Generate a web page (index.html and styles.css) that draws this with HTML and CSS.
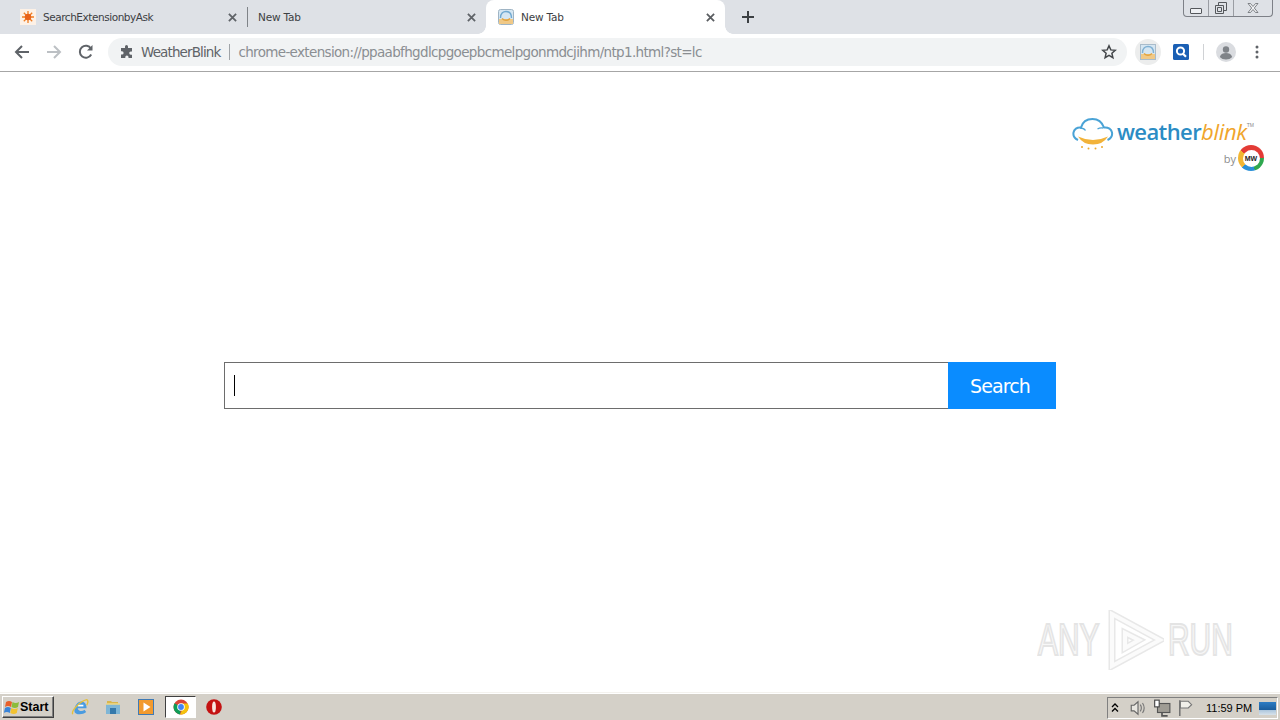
FILE: index.html
```html
<!DOCTYPE html>
<html lang="en">
<head>
<meta charset="utf-8">
<title>New Tab</title>
<link rel="stylesheet" href="styles.css">
</head>
<body>
<div class="browser">
  <header class="tabstrip">
    <div class="tab">
      <svg class="favicon" viewBox="0 0 16 16"><rect width="16" height="16" fill="#fdf1e6"/><g stroke="#ef7d22" stroke-width="1.3"><path d="M8 2v12M2 8h12M3.800 3.800l8.400 8.400M12.200 3.800l-8.400 8.400"/></g><circle cx="8" cy="8" r="3.200" fill="#e8621a"/></svg>
      <span class="tab-title">SearchExtensionbyAsk</span>
      <svg class="tab-close" viewBox="0 0 10 10"><path d="M1 1l8 8M9 1l-8 8"/></svg>
    </div>
    <div class="tab tab-sep">
      <span class="tab-title">New Tab</span>
      <svg class="tab-close" viewBox="0 0 10 10"><path d="M1 1l8 8M9 1l-8 8"/></svg>
    </div>
    <div class="tab tab-active">
      <svg class="favicon" viewBox="0 0 16 16"><rect x=".5" y=".5" width="15" height="15" rx="2" fill="#d5e6f2" stroke="#9fb4c4"/><path d="M2.500 9c0-5 3-6.500 5.500-6.500S13.500 4 13.500 9" fill="none" stroke="#6fa8d0" stroke-width="1.400"/><path d="M1 10h14v5H1z" fill="#f0c987"/><path d="M4 9.500q4 3.500 8 0" fill="none" stroke="#e2a33e" stroke-width="1.500"/></svg>
      <span class="tab-title">New Tab</span>
      <svg class="tab-close tab-close-dark" viewBox="0 0 10 10"><path d="M1 1l8 8M9 1l-8 8"/></svg>
    </div>
    <svg class="new-tab" viewBox="0 0 12 12"><path d="M6 0v12M0 6h12"/></svg>
    <div class="window-controls">
      <span class="win-btn win-min"><i class="min-glyph"></i></span>
      <span class="win-btn win-max"><svg viewBox="0 0 12 12"><path d="M3.500 3V.5h8v8H9M.5 3.500h8v8h-8z"/><path d="M2.500 5.500h4v4h-4z"/></svg></span>
      <span class="win-btn win-close"><svg viewBox="0 0 14 10"><path d="M2 .5h2.500L7 3.500 9.500.5H12L8.300 5 12 9.500H9.500L7 6.500 4.500 9.500H2L5.700 5z"/></svg></span>
    </div>
  </header>

  <nav class="toolbar">
    <svg class="nav-icon" viewBox="0 0 16 16"><path class="nav-stroke" d="M15 8H2M8 2L2 8l6 6"/></svg>
    <svg class="nav-icon nav-disabled" viewBox="0 0 16 16"><path class="nav-stroke" d="M1 8h13M8 2l6 6-6 6"/></svg>
    <svg class="nav-icon" viewBox="0 0 16 16"><path class="nav-stroke" d="M13.200 10.500A6 6 0 1 1 13 4.700"/><path class="nav-fill" d="M14.500 1v5.500H9z"/></svg>
    <div class="omnibox">
      <svg class="puzzle" viewBox="0 0 14 14"><path d="M5 1.500a1.500 1.500 0 0 1 3 0V3h4v3.500h-1.200a1.600 1.600 0 0 0 0 3.200H12V13H8.500v-1a1.600 1.600 0 0 0-3.200 0v1H1V9.500h1a1.600 1.600 0 0 0 0-3.200H1V3h4z"/></svg>
      <span class="site-name">WeatherBlink</span>
      <span class="omni-sep"></span>
      <span class="url">chrome-extension://ppaabfhgdlcpgoepbcmelpgonmdcjihm/ntp1.html?st=lc</span>
      <svg class="star" viewBox="0 0 16 16"><path d="M8 1.800l1.800 4.100 4.500.4-3.400 3 1 4.400L8 11.400l-3.900 2.300 1-4.400-3.400-3 4.500-.4z"/></svg>
    </div>
    <div class="ext-active">
      <svg class="ext-icon" viewBox="0 0 16 16"><rect x=".5" y=".5" width="15" height="15" fill="#d5e6f2" stroke="#a9bccb"/><path d="M2.500 9c0-5 3-6.500 5.500-6.500S13.500 4 13.500 9" fill="none" stroke="#7fb0d3" stroke-width="1.400"/><path d="M1 10h14v5H1z" fill="#f0c987"/><path d="M4 9.500q4 3.500 8 0" fill="none" stroke="#e2a33e" stroke-width="1.500"/></svg>
    </div>
    <svg class="ext-search" viewBox="0 0 16 16"><rect width="16" height="16" rx="1.500" fill="#1a5fb4"/><circle cx="7.500" cy="7" r="3.600" fill="none" stroke="#fff" stroke-width="2"/><path d="M10 9.800l3 3" stroke="#fff" stroke-width="2.200"/></svg>
    <span class="tool-sep"></span>
    <svg class="avatar" viewBox="0 0 20 20"><circle cx="10" cy="10" r="10" fill="#dadce0"/><circle cx="10" cy="7.500" r="3.200" fill="#7f8388"/><path d="M3.800 15c1-3 3.500-3.900 6.200-3.900s5.200.9 6.200 3.900c-1.500 1.700-3.800 2.500-6.200 2.500s-4.700-.8-6.200-2.500z" fill="#7f8388"/></svg>
    <svg class="menu-dots" viewBox="0 0 4 14"><circle cx="2" cy="2" r="1.500"/><circle cx="2" cy="7" r="1.500"/><circle cx="2" cy="12" r="1.500"/></svg>
  </nav>

  <main class="page">
    <div class="brand">
      <div class="brand-top">
        <svg class="cloud" viewBox="0 0 42 34"><path d="M6 23C2.500 21.500 1 18.500 1.500 15.500S5 10 9 10.500C10.500 5 15 2 20.500 2S30 5 32 10.500c4.500-.5 7.500 2 8 5s-1 6-4.500 7.500" fill="none" stroke="#4aa3d6" stroke-width="2"/><path d="M8 11c2.500 0 4.500 1 5.500 2.500M31 11c-2-.5-4 0-5.500 1" fill="none" stroke="#4aa3d6" stroke-width="1.300"/><path d="M6 19.500q15 7 30 0q-5 8-15 8T6 19.500z" fill="#f2b33a"/><circle cx="10" cy="30" r="1" fill="#eda92a"/><circle cx="16.500" cy="31.500" r="1" fill="#eda92a"/><circle cx="23.500" cy="31.500" r="1" fill="#eda92a"/><circle cx="30" cy="30" r="1" fill="#eda92a"/></svg>
        <span class="wordmark"><span class="wm-weather">weather</span><span class="wm-blink">blink</span></span>
        <sup class="tm">TM</sup>
      </div>
      <div class="brand-by">
        <span class="by">by</span>
        <span class="mw-ring"><span class="mw-inner">MW</span></span>
      </div>
    </div>

    <form class="search">
      <div class="search-input"><i class="caret"></i></div>
      <div class="search-btn">Search</div>
    </form>

    <div class="watermark">
      <span class="wm-text">ANY</span>
      <svg class="wm-play" viewBox="0 0 58 60"><path class="wm-band" d="M6 4v52l48-26zM19 23v15l14-8z"/><path class="wm-core" d="M6 4v52l48-26zM19 23v15l14-8z"/></svg>
      <span class="wm-text">RUN</span>
    </div>
  </main>

  <footer class="taskbar">
    <div class="start">
      <svg class="start-flag" viewBox="0 0 16 16"><path d="M2 3q3-2 6 0l-1 5q-3-2-6 0z" fill="#e8602a"/><path d="M8.500 3q3 2 6.500 0l-1 5q-3 2-6.500 0z" fill="#8cbc3c"/><path d="M1 9q3-2 5.800 0l-1 5q-3-2-6 0z" fill="#3a84d8"/><path d="M7.300 9q3 2 6.500 0l-1 5q-3 2-6.500 0z" fill="#f2c230"/></svg>
      <span class="start-label">Start</span>
    </div>
    <div class="quick">
      <svg class="task-icon task-ie" viewBox="0 0 16 16"><path d="M3 11.500c0-5 3-8.500 6-8.500 3.500 0 5 3 4.800 6H6c.2 2.500 3.800 3.500 6 1.500l1.500 2c-3.500 3-10.500 2.500-10.500-1z" fill="#4a9be0"/><rect x="6" y="6" width="5" height="1.500" fill="#fff"/><path d="M1.500 14.500C0 11 8 3 14 1.500c2 1 .5 4 0 5" fill="none" stroke="#e5c03c" stroke-width="1.200"/></svg>
      <svg class="task-icon" viewBox="0 0 16 16"><path d="M2 2h4l1 1h6v4H2z" fill="#d9b64e"/><path d="M1 5h14v10H1z" fill="#7fb6d6"/><path d="M5 15v-6h6v6z" fill="#3579ab"/><path d="M1 5h14" stroke="#efd98a" stroke-width="1.500"/></svg>
      <svg class="task-icon" viewBox="0 0 16 16"><rect x=".5" y=".5" width="15" height="15" fill="#f29a2e" stroke="#3f7ab5"/><path d="M5.500 3.500v9l7-4.500z" fill="#fff"/></svg>
    </div>
    <div class="task-active">
      <svg class="task-icon" viewBox="0 0 16 16"><circle cx="8" cy="8" r="7.500" fill="#db4437"/><path d="M8 8L1.500 4.300A7.500 7.500 0 0 0 7 15.400z" fill="#0f9d58"/><path d="M8 4.500h6.800A7.500 7.500 0 0 1 7 15.400L10.500 8z" fill="#f4c20d"/><circle cx="8" cy="8" r="3.800" fill="#fff"/><circle cx="8" cy="8" r="2.900" fill="#4285f4"/></svg>
    </div>
    <svg class="task-icon task-opera" viewBox="0 0 16 16"><circle cx="8" cy="8" r="7.800" fill="#c41212"/><ellipse cx="8" cy="8" rx="1.900" ry="5.500" fill="#f8e6e0"/></svg>
    <div class="tray">
      <svg class="tray-chevron" viewBox="0 0 8 10"><path d="M1 4l3-3 3 3M1 8.500l3-3 3 3" fill="none" stroke="#000" stroke-width="1.300"/></svg>
      <svg class="tray-icon" viewBox="0 0 16 16"><path d="M2 5.500h2.500L8 2.500v11l-3.500-3H2z" fill="#e8e6e0" stroke="#666"/><path d="M10 5q2 3 0 6M12 3.500q3 4.500 0 9" fill="none" stroke="#777"/></svg>
      <svg class="tray-icon" viewBox="0 0 16 16"><rect x="4" y="4" width="11" height="8" fill="#9f9c94" stroke="#555"/><rect x="1.500" y="1" width="4" height="6" fill="#fff" stroke="#444"/><path d="M8 12v3h5" fill="none" stroke="#555" stroke-width="1.500"/></svg>
      <svg class="tray-icon" viewBox="0 0 16 16"><path d="M2.500 1v14" stroke="#666" stroke-width="1.200"/><path d="M3 2h7l3 3-3 3H3z" fill="#f1f0ea" stroke="#777"/></svg>
      <span class="clock">11:59 PM</span>
      <span class="show-desktop"></span>
    </div>
  </footer>
</div>
</body>
</html>
```
FILE: styles.css
```css
* { box-sizing: border-box; }
html, body { margin: 0; height: 100%; }
body { overflow: hidden; font-family: "DejaVu Sans", Verdana, sans-serif; background: #fff; }
.browser { display: flex; flex-direction: column; width: 1280px; height: 720px; }

.tabstrip { display: flex; align-items: stretch; height: 34px; background: #dee1e6; padding-left: 8px; position: relative; flex: none; }
.tab { width: 239px; display: flex; align-items: center; padding-left: 12px; padding-right: 9px; gap: 7px; position: relative; }
.tab-sep { padding-left: 11px; }
.tab-sep::before { content: ""; position: absolute; left: 0; top: 7px; width: 1px; height: 20px; background: #7f8388; }
.tab-active { background: #fff; border-radius: 8px 8px 0 0; }
.tab-active::before, .tab-active::after { content: ""; position: absolute; bottom: 0; width: 8px; height: 8px; }
.tab-active::before { left: -8px; background: radial-gradient(circle at 0 0, #dee1e6 7.500px, #fff 8px); }
.tab-active::after { right: -8px; background: radial-gradient(circle at 100% 0, #dee1e6 7.500px, #fff 8px); }
.favicon { width: 16px; height: 16px; flex: none; }
.tab-title { flex: 1; font-size: 10.500px; letter-spacing: -0.450px; color: #3c4043; white-space: nowrap; overflow: hidden; }
.tab-sep .tab-title, .tab-active .tab-title { letter-spacing: -0.200px; }
.tab-close { width: 9px; height: 9px; flex: none; margin-right: 1px; }
.tab-close path { stroke: #5f6368; stroke-width: 2; fill: none; }
.tab-close-dark path { stroke: #5a5d61; }
.new-tab { width: 12px; height: 12px; align-self: center; margin-left: 17px; flex: none; }
.new-tab path { stroke: #3c4043; stroke-width: 2; fill: none; }

.window-controls { position: absolute; top: 0; right: 7px; width: 90px; height: 17px; display: flex; border: 1px solid #7d8087; border-top: 0; border-radius: 0 0 4px 4px; }
.win-btn { display: flex; align-items: center; justify-content: center; height: 100%; border-right: 1px solid #9a9da3; }
.win-min { width: 25px; }
.win-max { width: 25px; }
.win-close { flex: 1; border-right: 0; }
.min-glyph { display: block; width: 12px; height: 6px; margin-top: 5px; border: 1px solid #55585c; border-radius: 1px; background: #eef0f3; }
.win-max svg { width: 12px; height: 12px; fill: none; stroke: #55585c; }
.win-close svg { width: 14px; height: 10px; fill: #f1f2f4; stroke: #66696e; stroke-width: .8; }

.toolbar { display: flex; align-items: center; height: 38px; padding: 0 0 2px 14px; background: #fff; border-bottom: 1px solid #a6a6a6; flex: none; }
.nav-icon { width: 16px; height: 16px; margin-right: 16px; flex: none; }
.nav-stroke { fill: none; stroke: #5f6368; stroke-width: 2; }
.nav-fill { fill: #5f6368; }
.nav-disabled .nav-stroke { stroke: #bcc0c4; }
.omnibox { width: 1019px; margin-left: -2px; height: 28px; border-radius: 14px; background: #f1f3f4; display: flex; align-items: center; padding-left: 12px; flex: none; }
.puzzle { width: 14px; height: 14px; fill: #5f6368; flex: none; }
.site-name { margin-left: 7px; font-size: 13.500px; letter-spacing: -0.880px; color: #5f6368; }
.omni-sep { width: 1px; height: 16px; background: #a0a4a8; margin: 0 8px 0 9px; }
.url { font-size: 13.500px; letter-spacing: -0.660px; color: #8a8e92; white-space: nowrap; }
.star { width: 16px; height: 16px; margin-left: auto; margin-right: 10px; fill: none; stroke: #44474a; stroke-width: 1.500; flex: none; }
.ext-active { width: 26px; height: 26px; margin-left: 8px; border-radius: 50%; background: #eceded; display: flex; align-items: center; justify-content: center; flex: none; }
.ext-icon { width: 16px; height: 16px; }
.ext-search { width: 16px; height: 16px; margin-left: 12px; flex: none; }
.tool-sep { width: 1px; height: 16px; background: #d0d2d5; margin-left: 14px; flex: none; }
.avatar { width: 20px; height: 20px; margin-left: 12px; flex: none; }
.menu-dots { width: 4px; height: 14px; margin-left: 19px; fill: #5f6368; flex: none; }

.page { flex: 1; position: relative; background: #fff; display: flex; flex-direction: column; align-items: center; padding-top: 290px; }
.brand { position: absolute; top: 45px; right: 15px; width: 193px; display: flex; flex-direction: column; align-items: flex-end; }
.brand-top { display: flex; align-items: flex-start; width: 100%; height: 34px; }
.cloud { width: 42px; height: 34px; flex: none; }
.wordmark { font-family: "Open Sans", sans-serif; font-size: 22px; line-height: 28px; margin-left: 3px; letter-spacing: -0.300px; white-space: nowrap; }
.wm-weather { color: #2b8cc4; font-weight: 600; letter-spacing: -0.600px; }
.wm-blink { color: #f0a52c; font-style: italic; }
.tm { font-size: 5px; line-height: 8px; color: #888; margin: 4px 0 0 0; font-family: "Liberation Sans", sans-serif; }
.brand-by { display: flex; align-items: center; margin-top: -6px; margin-right: 1px; }
.by { font-family: "Open Sans", sans-serif; font-size: 11px; color: #8c8c8c; margin-right: 2px; }
.mw-ring { width: 26px; height: 26px; border-radius: 50%; background: conic-gradient(#e33b36 0 25%, #2fa84f 25% 45%, #2a8fd6 45% 62%, #f2b632 62% 85%, #e33b36 85%); display: flex; align-items: center; justify-content: center; }
.mw-inner { width: 17px; height: 17px; border-radius: 50%; background: #fff; color: #222; font: bold 7px/17px "Liberation Sans", sans-serif; text-align: center; }

.search { display: flex; width: 832px; height: 47px; margin: 0; }
.search-input { flex: 1; border: 1px solid #6d6d6d; border-right: 0; display: flex; align-items: center; padding-left: 9px; background: #fff; }
.caret { display: block; width: 1px; height: 21px; background: #000; }
.search-btn { width: 108px; background: #0a8cff; color: #fff; font-size: 19px; letter-spacing: -0.900px; display: flex; align-items: center; justify-content: center; padding: 0 4px 0 0; }

.watermark { position: absolute; left: 1038px; top: 538px; display: flex; align-items: center; }
.wm-text { display: block; width: 64px; font-family: "Liberation Sans", sans-serif; font-size: 44px; line-height: 44px; color: #f7f7f7; -webkit-text-stroke: 2px #e4e4e4; transform: scaleX(.68); transform-origin: left center; white-space: nowrap; }
.wm-play { width: 58px; height: 60px; margin: 0 4px; flex: none; }
.wm-band { fill: none; stroke: #e8e8e8; stroke-width: 7; }
.wm-core { fill: none; stroke: #fbfbfb; stroke-width: 4; }

.taskbar { height: 28px; background: #d4d0c8; border-top: 1px solid #f4f2ee; box-shadow: inset 0 1px 0 #fff; display: flex; align-items: center; flex: none; position: relative; }
.start { margin-left: 2px; width: 52px; height: 22px; display: flex; align-items: center; padding-left: 1px; background: #d4d0c8; border: 1px solid; border-color: #fff #404040 #404040 #fff; box-shadow: inset -1px -1px 0 #808080; }
.start-flag { width: 16px; height: 16px; flex: none; }
.start-label { font: bold 12.500px "Liberation Sans", sans-serif; color: #000; }
.quick { display: flex; align-items: center; gap: 17px; margin-left: 17px; }
.task-icon { width: 16px; height: 16px; flex: none; }
.task-ie { width: 18px; height: 18px; margin-right: -1px; }
.task-active { width: 31px; height: 22px; margin-left: 11px; display: flex; align-items: center; justify-content: center; background: #fff; border: 1px solid; border-color: #404040 #fff #fff #404040; }
.task-opera { margin-left: 10px; }
.tray { position: absolute; right: 2px; top: 4px; width: 171px; height: 22px; display: flex; align-items: center; border: 1px solid; border-color: #808080 #fff #fff #808080; padding-left: 3px; }
.tray-chevron { width: 8px; height: 10px; flex: none; }
.tray-icon { width: 18px; height: 18px; margin-left: 6px; flex: none; }
.tray-chevron + .tray-icon { margin-left: 10px; }
.clock { font: 11px "Liberation Sans", sans-serif; color: #000; margin-left: 11px; white-space: nowrap; }
.show-desktop { width: 17px; height: 13px; margin-left: 7px; background: linear-gradient(#2c7cc4, #1b5d9c 60%, #a9c4dc 60%, #d8e2ea); flex: none; }
```
